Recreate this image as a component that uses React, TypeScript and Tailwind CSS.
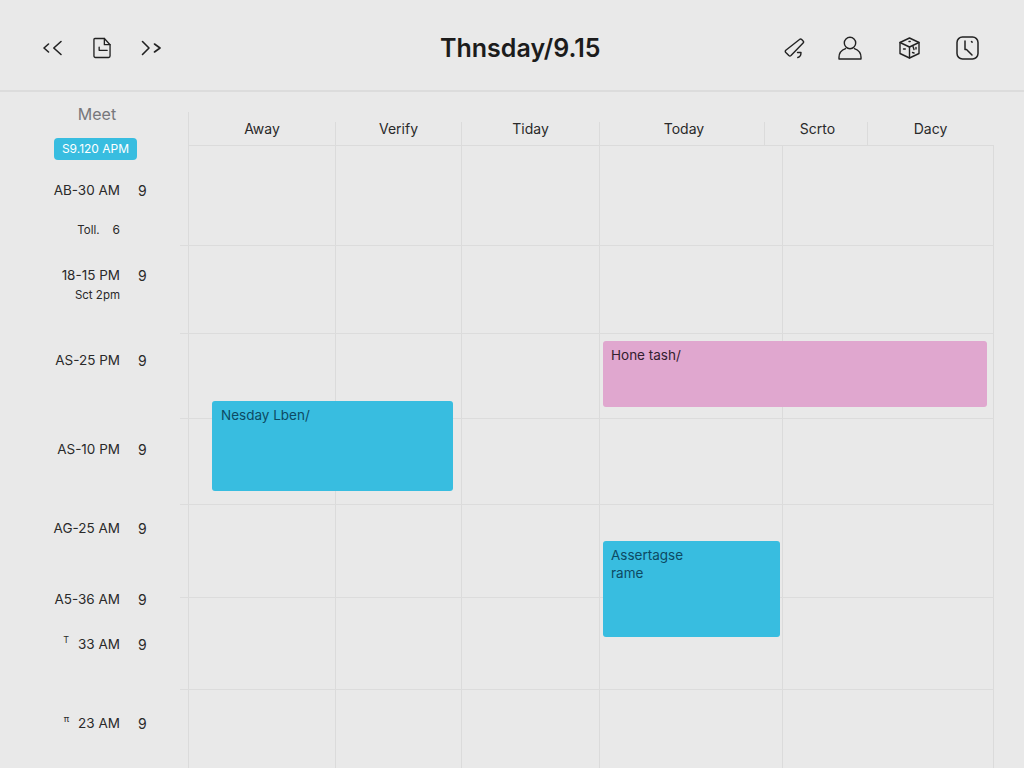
import React from "react";

const ink = "#222222";

function IconBack() {
  return (
    <svg width="20" height="16" viewBox="0 0 20 16" fill="none" stroke={ink} strokeWidth="1.6" strokeLinecap="round" strokeLinejoin="round">
      <path d="M5.5 4 1 8l4.5 4" />
      <path d="M18 1.5 10.8 8l7.2 6.5" />
    </svg>
  );
}
function IconForward() {
  return (
    <svg width="20" height="16" viewBox="0 0 20 16" fill="none" stroke={ink} strokeWidth="1.6" strokeLinecap="round" strokeLinejoin="round">
      <path d="M1.5 1.5 8 8l-6.5 6.5" />
      <path d="M13.5 4 19 8l-5.5 4" />
    </svg>
  );
}
function IconDoc() {
  return (
    <svg width="18" height="22" viewBox="0 0 19 22" fill="none" stroke={ink} strokeWidth="1.4" strokeLinecap="round" strokeLinejoin="round">
      <path d="M2 1h10l6 6.5v12a1.5 1.5 0 0 1-1.5 1.5h-14A1.5 1.5 0 0 1 1 19.5V2a1 1 0 0 1 1-1z" />
      <path d="M12 1v6.5h6" />
      <path d="M6.5 10v3.5H15" />
    </svg>
  );
}
function IconPencil() {
  return (
    <svg width="21" height="21" viewBox="0 0 21 21" fill="none" stroke={ink} strokeWidth="1.4" strokeLinecap="round" strokeLinejoin="round">
      <path d="M15.5 1.5a1.6 1.6 0 0 1 2.2 0l1.4 1.4a1.6 1.6 0 0 1 0 2.2L7 17.5a1.6 1.6 0 0 1-2.2 0l-3-3a1.6 1.6 0 0 1 0-2.2z" />
      <path d="M13.5 14.5h3.5c0 2.8-1 4.5-3.2 5" />
    </svg>
  );
}
function IconUser() {
  return (
    <svg width="24" height="24" viewBox="0 0 24 24" fill="none" stroke={ink} strokeWidth="1.4" strokeLinecap="round" strokeLinejoin="round">
      <circle cx="12" cy="7" r="5.7" />
      <path d="M7.6 12.6C3.8 14 1 16.6 1 21.2V23h22v-1.8c0-4.6-2.8-7.2-6.6-8.6" />
    </svg>
  );
}
function IconCube() {
  return (
    <svg width="21" height="22" viewBox="0 0 21 22" fill="none" stroke={ink} strokeWidth="1.4" strokeLinecap="round" strokeLinejoin="round">
      <path d="M10.5 1 20 5.5v11L10.5 21 1 16.5v-11z" />
      <path d="M1 5.5l9.5 4.5L20 5.5" />
      <path d="M10.5 10v11" />
      <path d="M10 4.5h1.2M4.5 12h1.8M14 9.5l1 3M17 10.5v1.5M13.5 15.5l1.5.5" />
    </svg>
  );
}
function IconClock() {
  return (
    <svg width="23" height="24" viewBox="0 0 23 24" fill="none" stroke={ink} strokeWidth="1.5" strokeLinecap="round" strokeLinejoin="round">
      <rect x="1" y="1" width="21" height="22" rx="5.5" />
      <path d="M9 5v8.5h1.5L16 19" />
      <path d="M15.5 5.5l.6.6" />
    </svg>
  );
}

const headers = [
  { label: "Away", cls: "w-[146px]" },
  { label: "Verify", cls: "w-[126px] border-l border-[#dbdbdb]" },
  { label: "Tiday", cls: "w-[138px] border-l border-[#dbdbdb]" },
  { label: "Today", cls: "w-[165px] border-l border-[#dbdbdb] pl-[4px]" },
  { label: "Scrto", cls: "w-[103px] border-l border-[#dbdbdb] pl-[3px]" },
  { label: "Dacy", cls: "w-[126px] border-l border-[#dbdbdb]" },
];

const rowHeights = ["h-[100px]", "h-[88px]", "h-[85px]", "h-[86px]", "h-[93px]", "h-[92px]", "h-[100px]"];
const cellWidths = ["w-[147px]", "w-[126px]", "w-[138px]", "w-[183px]", "w-[212px] border-r"];

type TimeRow = { label: string; num: string; gap: string; small?: boolean; mark?: string };
const times: TimeRow[] = [
  { label: "AB-30 AM", num: "9", gap: "mt-[20px]" },
  { label: "Toll.", num: "6", gap: "mt-[20px]", small: true },
  { label: "18-15 PM", num: "9", gap: "mt-[25px]" },
  { label: "Sct 2pm", num: "", gap: "mt-[1px]", small: true },
  { label: "AS-25 PM", num: "9", gap: "mt-[44px]" },
  { label: "AS-10 PM", num: "9", gap: "mt-[69px]" },
  { label: "AG-25 AM", num: "9", gap: "mt-[59px]" },
  { label: "A5-36 AM", num: "9", gap: "mt-[51px]" },
  { label: "33 AM", num: "9", gap: "mt-[25px]", mark: "T" },
  { label: "23 AM", num: "9", gap: "mt-[59px]", mark: "π" },
];

export default function App() {
  return (
    <div className="w-[1024px] h-[768px] overflow-hidden bg-[#e9e9e9] text-[#2a2a2a] font-['Inter','Liberation_Sans',sans-serif]">
      <header className="h-[92px] flex items-center border-b-2 border-[#dcdcdc] pt-[6px]">
        <div className="w-[440px] flex items-center pl-[43px]">
          <IconBack />
          <div className="ml-[30px]"><IconDoc /></div>
          <div className="ml-[30px]"><IconForward /></div>
        </div>
        <h1 className="w-[160px] text-center whitespace-nowrap text-[25px] leading-[32px] font-semibold text-[#1c1c1c]">Thnsday/9.15</h1>
        <div className="flex items-center pl-[184px]">
          <IconPencil />
          <div className="ml-[33px]"><IconUser /></div>
          <div className="ml-[37px]"><IconCube /></div>
          <div className="ml-[36px]"><IconClock /></div>
        </div>
      </header>

      <div className="flex">
        <aside className="w-[180px] shrink-0">
          <div className="mt-[12px] h-[20px] w-[194px] text-center text-[16px] leading-[20px] text-[#77777b]">Meet</div>
          <div className="mt-[14px] ml-[54px] w-[83px] h-[22px] rounded-[4px] bg-[#38bde0] text-center text-[12px] leading-[22px] text-white">S9.120 APM</div>
          {times.map((t) => (
            <div key={t.label} className={`flex h-[20px] items-center ${t.gap}`}>
              <div className={`w-[120px] flex justify-end whitespace-nowrap ${t.small ? "text-[11.5px]" : "text-[13.5px]"}`}>
                {t.mark && <span className="mr-[9px] text-[9px] leading-[12px] mb-[3px]">{t.mark}</span>}
                {t.small && t.num ? <span>{t.label}<span className="ml-[13px] text-[12px]">{t.num}</span></span> : <span>{t.label}</span>}
              </div>
              {!t.small && <div className="ml-[18px] text-[14px]">{t.num}</div>}
            </div>
          ))}
        </aside>

        <main className="relative w-[814px] shrink-0 pt-[20px]">
          <div className="ml-[8px] flex h-[34px] border-l border-b border-[#dbdbdb] w-[806px]">
            {headers.map((h) => (
              <div key={h.label} className={`${h.cls} mt-[10px] h-[23px] text-center text-[14px] leading-[14px]`}>{h.label}</div>
            ))}
          </div>
          {rowHeights.map((rh, i) => (
            <div key={rh} className={`flex ${rh} ${i < rowHeights.length - 1 ? "border-b" : ""} border-[#dcdcdc]`}>
              <div className="w-[8px] shrink-0" />
              {cellWidths.map((w) => (
                <div key={w} className={`${w} shrink-0 border-l border-[#dbdbdb]`} />
              ))}
            </div>
          ))}

          <div className="absolute left-[423px] top-[249px] w-[384px] h-[66px] rounded-[3px] bg-[#e0a7cf] pl-[8px] pt-[5px] text-[13.5px] leading-[18px] text-[#33202e]">Hone tash/</div>
          <div className="absolute left-[32px] top-[309px] w-[241px] h-[90px] rounded-[3px] bg-[#38bde0] pl-[9px] pt-[5px] text-[13.5px] leading-[18px] text-[#0d4a63]">Nesday Lben/</div>
          <div className="absolute left-[423px] top-[449px] w-[177px] h-[96px] rounded-[3px] bg-[#38bde0] pl-[8px] pt-[5px] text-[13.5px] leading-[18px] text-[#0d4a63]">Assertagse<br />rame</div>
        </main>
      </div>
    </div>
  );
}
